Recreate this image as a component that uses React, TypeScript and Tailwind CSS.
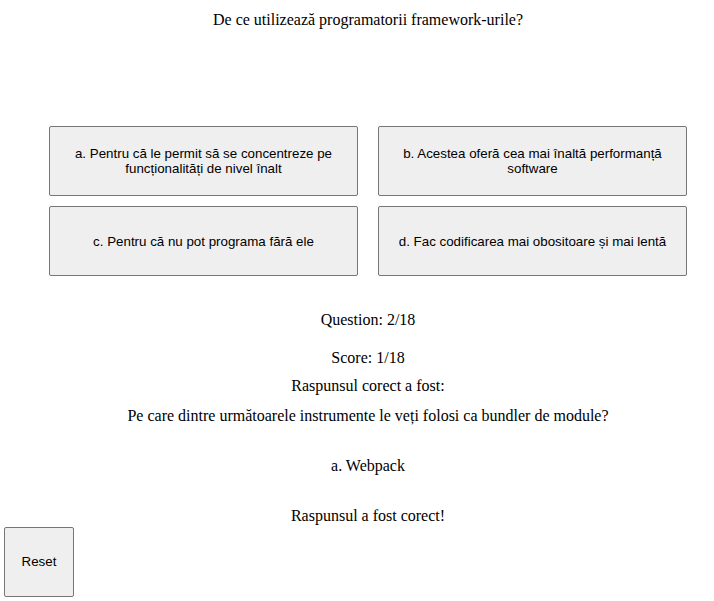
import React from "react";

const serif = { fontFamily: '"Liberation Serif", "Times New Roman", serif' };

function Choice({ children }: { children: React.ReactNode }) {
  return (
    <button
      className="w-[309px] h-[70px] bg-[#efefef] border border-[#767676] rounded-[2px] text-[13.333px] leading-[15px] text-black text-center px-[6px] flex items-center justify-center"
      style={{ fontFamily: '"Liberation Sans", Arial, sans-serif' }}
    >
      <span>{children}</span>
    </button>
  );
}

export default function App() {
  return (
    <div className="w-[714px] h-[601px] bg-white text-black text-[16px] leading-[18px]" style={serif}>
      <div className="pl-[22px]">
        <div className="pt-[11px] text-center">De ce utilizează programatorii framework-urile?</div>
      </div>
      <div className="mt-[97px] pl-[49px] grid grid-cols-[309px_309px] gap-x-[20px] gap-y-[10px]">
        <Choice>a. Pentru că le permit să se concentreze pe funcționalități de nivel înalt</Choice>
        <Choice>b. Acestea oferă cea mai înaltă performanță software</Choice>
        <Choice>c. Pentru că nu pot programa fără ele</Choice>
        <Choice>d. Fac codificarea mai obositoare și mai lentă</Choice>
      </div>
      <div className="pl-[22px]">
        <div className="mt-[35px] text-center">Question: 2/18</div>
        <div className="mt-[20px] text-center">Score: 1/18</div>
        <div className="mt-[10px] text-center">Raspunsul corect a fost:</div>
        <div className="mt-[12px] text-center">Pe care dintre următoarele instrumente le veți folosi ca bundler de module?</div>
        <div className="mt-[32px] text-center">a. Webpack</div>
        <div className="mt-[32px] text-center">Raspunsul a fost corect!</div>
      </div>
      <div className="mt-[2px] pl-[4px]">
        <button
          className="w-[70px] h-[70px] bg-[#efefef] border border-[#767676] rounded-[2px] text-[13.333px] text-black"
          style={{ fontFamily: '"Liberation Sans", Arial, sans-serif' }}
        >
          Reset
        </button>
      </div>
    </div>
  );
}
